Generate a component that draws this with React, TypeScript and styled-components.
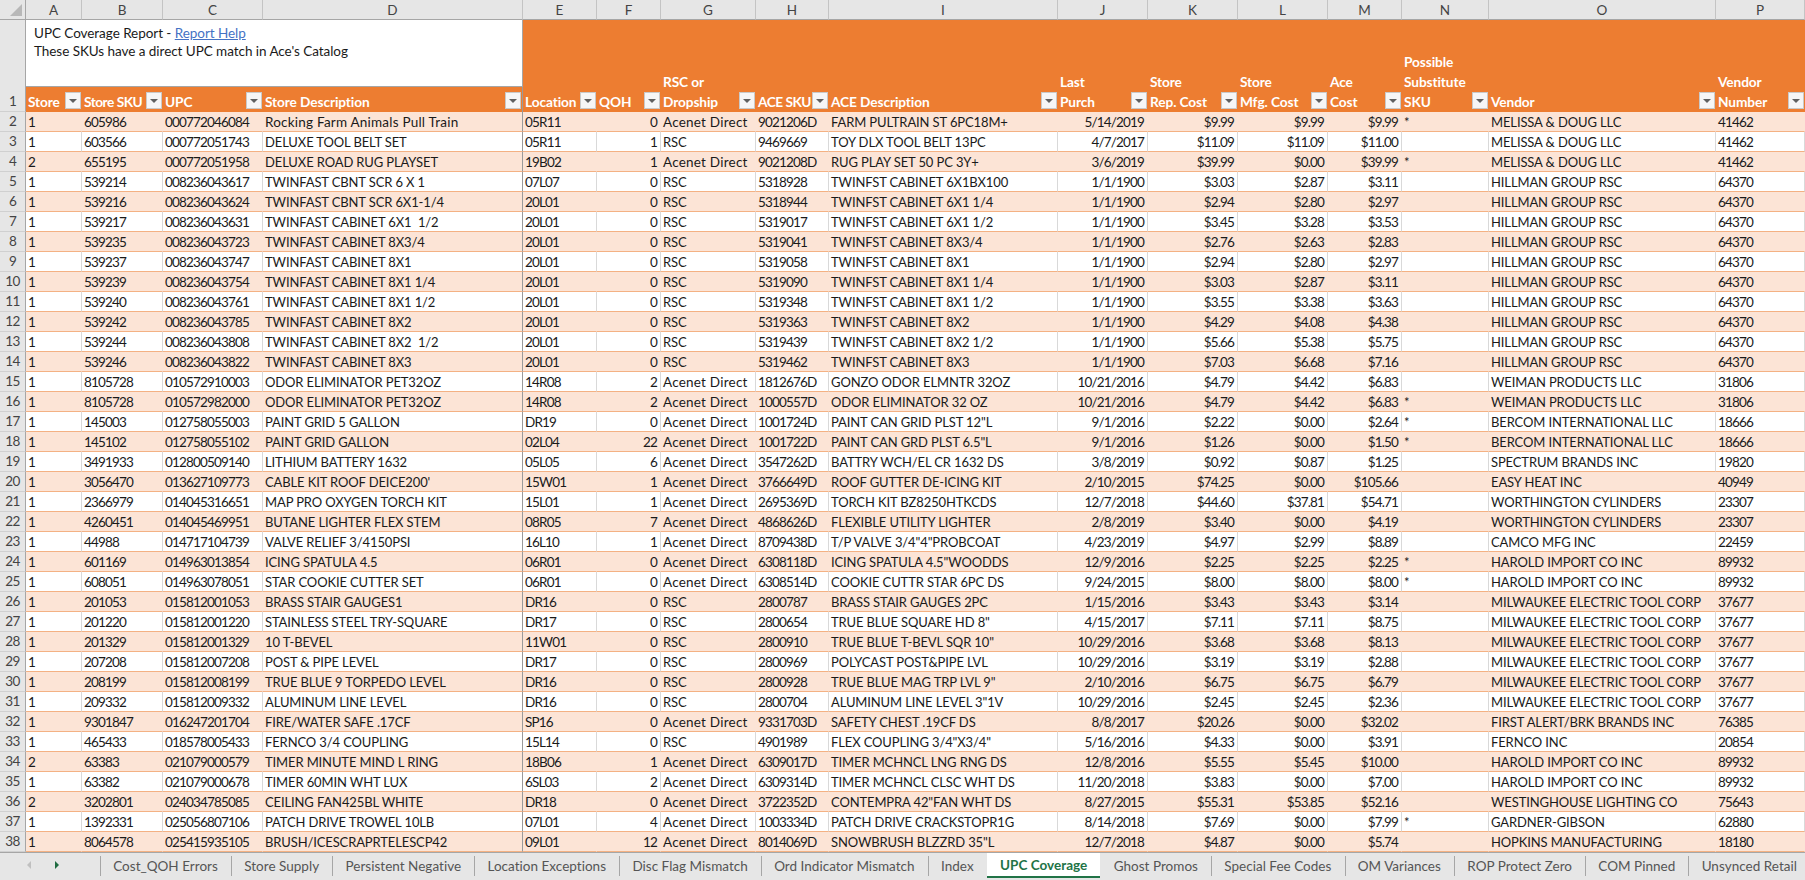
import * as React from 'react'
import styled, { createGlobalStyle } from 'styled-components'

const FONT = `Lato, 'Noto Sans', sans-serif`

const GlobalStyle = createGlobalStyle`
  html, body {
    margin: 0;
    padding: 0;
    height: 100%;
    overflow: hidden;
    background: #fff;
  }
`

const Page = styled.div`
  width: 1805px;
  height: 880px;
  display: flex;
  flex-direction: column;
  font-family: ${FONT};
  color: #1a1a1a;
`
const Sheet = styled.div`
  position: relative;
  flex: 0 0 852px;
  overflow: hidden;
`
const Table = styled.table`
  width: 1805px;
  table-layout: fixed;
  border-collapse: separate;
  border-spacing: 0;
`
const Col = styled.col<{ $w: number }>`
  width: ${p => p.$w}px;
`
const Corner = styled.th`
  position: relative;
  height: 19px;
  padding: 0;
  background: #e6e6e6;
  border-right: 1px solid #a6a6a6;
  border-bottom: 1px solid #a6a6a6;
  &::after {
    content: '';
    position: absolute;
    left: 10px;
    top: 4px;
    width: 12px;
    height: 12px;
    background: #b8b8b8;
    clip-path: polygon(100% 0, 100% 100%, 0 100%);
  }
`
const ColLetter = styled.th`
  padding: 0;
  height: 19px;
  font-size: 13.5px;
  font-weight: 400;
  text-align: center;
  color: #444;
  background: #e6e6e6;
  border-right: 1px solid #c4c4c4;
  border-bottom: 1px solid #a6a6a6;
`
const RowNum = styled.th<{ $tall?: boolean }>`
  padding: 0;
  font-weight: 400;
  font-size: 13.5px;
  letter-spacing: -0.6px;
  text-align: center;
  vertical-align: ${p => (p.$tall ? 'bottom' : 'middle')};
  line-height: 19px;
  color: #444;
  background: #e6e6e6;
  border-right: 1px solid #a6a6a6;
  border-bottom: 1px solid #d0d0d0;
`
const HeadCell = styled.th<{ $freeze?: boolean; $tight?: boolean }>`
  position: relative;
  height: 92px;
  padding: 0 2px 0 2px;
  vertical-align: bottom;
  text-align: left;
  white-space: pre;
  overflow: hidden;
  font-size: 13.7px;
  letter-spacing: ${p => (p.$tight ? '-0.5px' : '-0.1px')};
  font-weight: 700;
  line-height: 20px;
  color: #fff;
  background: #ed7d31;
  border-right: ${p => (p.$freeze ? '1px solid #9a9a9a' : '0')};
`
const FilterButton = styled.span`
  position: absolute;
  right: 1px;
  bottom: 3px;
  width: 14px;
  height: 15px;
  background: #f6f6f6;
  border: 1px solid #c9c9c9;
  &::after {
    content: '';
    position: absolute;
    left: 3px;
    top: 6px;
    border-left: 4px solid transparent;
    border-right: 4px solid transparent;
    border-top: 4px solid #606060;
  }
`
const Row = styled.tr`
  &:nth-child(odd) td {
    background: #fce4d6;
    border-right-color: transparent;
  }
  &:nth-child(odd) td.freeze {
    border-right-color: #9a9a9a;
  }
`
type CellKind = 'num' | 'caps' | 'mixed'
// Calibri's digits are narrow next to its capitals, so each kind gets its own spacing
const KIND_FONT: Record<CellKind, string> = {
  num: 'font-size: 13.5px; letter-spacing: -0.83px;',
  caps: 'font-size: 13px; letter-spacing: -0.12px;',
  mixed: 'font-size: 13.5px; letter-spacing: 0.22px;'
}
const Cell = styled.td<{ $right?: boolean; $freeze?: boolean; $kind: CellKind }>`
  height: 18px;
  padding: 1px ${p => (p.$right ? '3px' : '2px')} 0 2px;
  line-height: 18px;
  white-space: pre;
  overflow: hidden;
  text-align: ${p => (p.$right ? 'right' : 'left')};
  background: #fff;
  border-bottom: 1px solid #f4b183;
  border-right: 1px solid ${p => (p.$freeze ? '#9a9a9a' : '#d9d9d9')};
  ${p => KIND_FONT[p.$kind]}
`
const TextBox = styled.div`
  position: absolute;
  top: 20px;
  left: 26px;
  box-sizing: border-box;
  width: 497px;
  height: 67px;
  padding: 4px 0 0 8px;
  background: #fff;
  border-bottom: 1px solid #a6a6a6;
  border-right: 1px solid #a6a6a6;
  font-size: 13.5px;
  letter-spacing: -0.05px;
  line-height: 18px;
`
const HelpLink = styled.a`
  color: #4472c4;
  text-decoration: underline;
`
const TabBar = styled.div`
  flex: 0 0 28px;
  box-sizing: border-box;
  display: flex;
  background: #e6e6e6;
  border-top: 1px solid #a6a6a6;
  font-size: 13.5px;
  letter-spacing: 0.02px;
  color: #555;
`
const Scroller = styled.div`
  flex: 0 0 100px;
  display: flex;
  align-items: center;
  gap: 24px;
  padding: 0 0 3px 27px;
  box-sizing: border-box;
`
const Arrow = styled.span<{ $on?: boolean }>`
  border-top: 4px solid transparent;
  border-bottom: 4px solid transparent;
  ${p =>
    p.$on
      ? 'border-left: 4px solid #1f6b41;'
      : 'border-right: 4px solid #c0c0c0;'}
`
const Tab = styled.div<{ $active?: boolean; $before?: boolean }>`
  box-sizing: border-box;
  height: 25px;
  padding: 0 13.2px;
  display: flex;
  align-items: center;
  white-space: nowrap;
  ${p =>
    p.$active
      ? `
    background: #fff;
    color: #217346;
    font-weight: 700;
    border-bottom: 2px solid #217346;
  `
      : ''}
  position: relative;
  &::before {
    content: '';
    display: ${p => (p.$active || p.$before ? 'none' : 'block')};
    position: absolute;
    left: 0;
    top: 3px;
    bottom: 2px;
    width: 1px;
    background: #a6a6a6;
  }
`

const WIDTHS = [26, 56, 81, 100, 260, 74, 64, 95, 73, 229, 90, 90, 90, 74, 87, 227, 89]
const LETTERS = 'ABCDEFGHIJKLMNOP'.split('')
const HEADERS = [
  'Store',
  'Store SKU',
  'UPC',
  'Store Description',
  'Location',
  'QOH',
  'RSC or\nDropship',
  'ACE SKU',
  'ACE Description',
  'Last\nPurch',
  'Store\nRep. Cost',
  'Store\nMfg. Cost',
  'Ace\nCost',
  'Possible\nSubstitute\nSKU',
  'Vendor',
  'Vendor\nNumber'
]
// columns with right aligned values: QOH, Last Purch, the three costs
const RIGHT = new Set([5, 9, 10, 11, 12])
// columns holding words, everything else is digits and codes
const WORDS = new Set([3, 6, 8, 13, 14])

const kindOf = (value: string, column: number): CellKind => {
  if (!WORDS.has(column)) return 'num'
  return value === value.toUpperCase() ? 'caps' : 'mixed'
}

const ROWS = `1|605986|000772046084|Rocking Farm Animals Pull Train|05R11|0|Acenet Direct|9021206D|FARM PULTRAIN ST 6PC18M+|5/14/2019|$9.99|$9.99|$9.99|*|MELISSA & DOUG LLC|41462
1|603566|000772051743|DELUXE TOOL BELT SET|05R11|1|RSC|9469669|TOY DLX TOOL BELT 13PC|4/7/2017|$11.09|$11.09|$11.00||MELISSA & DOUG LLC|41462
2|655195|000772051958|DELUXE ROAD RUG PLAYSET|19B02|1|Acenet Direct|9021208D|RUG PLAY SET 50 PC 3Y+|3/6/2019|$39.99|$0.00|$39.99|*|MELISSA & DOUG LLC|41462
1|539214|008236043617|TWINFAST CBNT SCR 6 X 1|07L07|0|RSC|5318928|TWINFST CABINET 6X1BX100|1/1/1900|$3.03|$2.87|$3.11||HILLMAN GROUP RSC|64370
1|539216|008236043624|TWINFAST CBNT SCR 6X1-1/4|20L01|0|RSC|5318944|TWINFST CABINET 6X1 1/4|1/1/1900|$2.94|$2.80|$2.97||HILLMAN GROUP RSC|64370
1|539217|008236043631|TWINFAST CABINET 6X1  1/2|20L01|0|RSC|5319017|TWINFST CABINET 6X1 1/2|1/1/1900|$3.45|$3.28|$3.53||HILLMAN GROUP RSC|64370
1|539235|008236043723|TWINFAST CABINET 8X3/4|20L01|0|RSC|5319041|TWINFST CABINET 8X3/4|1/1/1900|$2.76|$2.63|$2.83||HILLMAN GROUP RSC|64370
1|539237|008236043747|TWINFAST CABINET 8X1|20L01|0|RSC|5319058|TWINFST CABINET 8X1|1/1/1900|$2.94|$2.80|$2.97||HILLMAN GROUP RSC|64370
1|539239|008236043754|TWINFAST CABINET 8X1 1/4|20L01|0|RSC|5319090|TWINFST CABINET 8X1 1/4|1/1/1900|$3.03|$2.87|$3.11||HILLMAN GROUP RSC|64370
1|539240|008236043761|TWINFAST CABINET 8X1 1/2|20L01|0|RSC|5319348|TWINFST CABINET 8X1 1/2|1/1/1900|$3.55|$3.38|$3.63||HILLMAN GROUP RSC|64370
1|539242|008236043785|TWINFAST CABINET 8X2|20L01|0|RSC|5319363|TWINFST CABINET 8X2|1/1/1900|$4.29|$4.08|$4.38||HILLMAN GROUP RSC|64370
1|539244|008236043808|TWINFAST CABINET 8X2  1/2|20L01|0|RSC|5319439|TWINFST CABINET 8X2 1/2|1/1/1900|$5.66|$5.38|$5.75||HILLMAN GROUP RSC|64370
1|539246|008236043822|TWINFAST CABINET 8X3|20L01|0|RSC|5319462|TWINFST CABINET 8X3|1/1/1900|$7.03|$6.68|$7.16||HILLMAN GROUP RSC|64370
1|8105728|010572910003|ODOR ELIMINATOR PET32OZ|14R08|2|Acenet Direct|1812676D|GONZO ODOR ELMNTR 32OZ|10/21/2016|$4.79|$4.42|$6.83||WEIMAN PRODUCTS LLC|31806
1|8105728|010572982000|ODOR ELIMINATOR PET32OZ|14R08|2|Acenet Direct|1000557D|ODOR ELIMINATOR 32 OZ|10/21/2016|$4.79|$4.42|$6.83|*|WEIMAN PRODUCTS LLC|31806
1|145003|012758055003|PAINT GRID 5 GALLON|DR19|0|Acenet Direct|1001724D|PAINT CAN GRID PLST 12"L|9/1/2016|$2.22|$0.00|$2.64|*|BERCOM INTERNATIONAL LLC|18666
1|145102|012758055102|PAINT GRID GALLON|02L04|22|Acenet Direct|1001722D|PAINT CAN GRD PLST 6.5"L|9/1/2016|$1.26|$0.00|$1.50|*|BERCOM INTERNATIONAL LLC|18666
1|3491933|012800509140|LITHIUM BATTERY 1632|05L05|6|Acenet Direct|3547262D|BATTRY WCH/EL CR 1632 DS|3/8/2019|$0.92|$0.87|$1.25||SPECTRUM BRANDS INC|19820
1|3056470|013627109773|CABLE KIT ROOF DEICE200'|15W01|1|Acenet Direct|3766649D|ROOF GUTTER DE-ICING KIT|2/10/2015|$74.25|$0.00|$105.66||EASY HEAT INC|40949
1|2366979|014045316651|MAP PRO OXYGEN TORCH KIT|15L01|1|Acenet Direct|2695369D|TORCH KIT BZ8250HTKCDS|12/7/2018|$44.60|$37.81|$54.71||WORTHINGTON CYLINDERS|23307
1|4260451|014045469951|BUTANE LIGHTER FLEX STEM|08R05|7|Acenet Direct|4868626D|FLEXIBLE UTILITY LIGHTER|2/8/2019|$3.40|$0.00|$4.19||WORTHINGTON CYLINDERS|23307
1|44988|014717104739|VALVE RELIEF 3/4150PSI|16L10|1|Acenet Direct|8709438D|T/P VALVE 3/4"4"PROBCOAT|4/23/2019|$4.97|$2.99|$8.89||CAMCO MFG INC|22459
1|601169|014963013854|ICING SPATULA 4.5|06R01|0|Acenet Direct|6308118D|ICING SPATULA 4.5"WOODDS|12/9/2016|$2.25|$2.25|$2.25|*|HAROLD IMPORT CO INC|89932
1|608051|014963078051|STAR COOKIE CUTTER SET|06R01|0|Acenet Direct|6308514D|COOKIE CUTTR STAR 6PC DS|9/24/2015|$8.00|$8.00|$8.00|*|HAROLD IMPORT CO INC|89932
1|201053|015812001053|BRASS STAIR GAUGES1|DR16|0|RSC|2800787|BRASS STAIR GAUGES 2PC|1/15/2016|$3.43|$3.43|$3.14||MILWAUKEE ELECTRIC TOOL CORP|37677
1|201220|015812001220|STAINLESS STEEL TRY-SQUARE|DR17|0|RSC|2800654|TRUE BLUE SQUARE HD 8"|4/15/2017|$7.11|$7.11|$8.75||MILWAUKEE ELECTRIC TOOL CORP|37677
1|201329|015812001329|10 T-BEVEL|11W01|0|RSC|2800910|TRUE BLUE T-BEVL SQR 10"|10/29/2016|$3.68|$3.68|$8.13||MILWAUKEE ELECTRIC TOOL CORP|37677
1|207208|015812007208|POST & PIPE LEVEL|DR17|0|RSC|2800969|POLYCAST POST&PIPE LVL|10/29/2016|$3.19|$3.19|$2.88||MILWAUKEE ELECTRIC TOOL CORP|37677
1|208199|015812008199|TRUE BLUE 9 TORPEDO LEVEL|DR16|0|RSC|2800928|TRUE BLUE MAG TRP LVL 9"|2/10/2016|$6.75|$6.75|$6.79||MILWAUKEE ELECTRIC TOOL CORP|37677
1|209332|015812009332|ALUMINUM LINE LEVEL|DR16|0|RSC|2800704|ALUMINUM LINE LEVEL 3"1V|10/29/2016|$2.45|$2.45|$2.36||MILWAUKEE ELECTRIC TOOL CORP|37677
1|9301847|016247201704|FIRE/WATER SAFE .17CF|SP16|0|Acenet Direct|9331703D|SAFETY CHEST .19CF DS|8/8/2017|$20.26|$0.00|$32.02||FIRST ALERT/BRK BRANDS INC|76385
1|465433|018578005433|FERNCO 3/4 COUPLING|15L14|0|RSC|4901989|FLEX COUPLING 3/4"X3/4"|5/16/2016|$4.33|$0.00|$3.91||FERNCO INC|20854
2|63383|021079000579|TIMER MINUTE MIND L RING|18B06|1|Acenet Direct|6309017D|TIMER MCHNCL LNG RNG DS|12/8/2016|$5.55|$5.45|$10.00||HAROLD IMPORT CO INC|89932
1|63382|021079000678|TIMER 60MIN WHT LUX|6SL03|2|Acenet Direct|6309314D|TIMER MCHNCL CLSC WHT DS|11/20/2018|$3.83|$0.00|$7.00||HAROLD IMPORT CO INC|89932
2|3202801|024034785085|CEILING FAN425BL WHITE|DR18|0|Acenet Direct|3722352D|CONTEMPRA 42"FAN WHT DS|8/27/2015|$55.31|$53.85|$52.16||WESTINGHOUSE LIGHTING CO|75643
1|1392331|025056807106|PATCH DRIVE TROWEL 10LB|07L01|4|Acenet Direct|1003334D|PATCH DRIVE CRACKSTOPR1G|8/14/2018|$7.69|$0.00|$7.99|*|GARDNER-GIBSON|62880
1|8064578|025415935105|BRUSH/ICESCRAPRTELESCP42|09L01|12|Acenet Direct|8014069D|SNOWBRUSH BLZZRD 35"L|12/7/2018|$4.87|$0.00|$5.74||HOPKINS MANUFACTURING|18180`
  .split('\n')
  .map(line => line.split('|'))

const TABS = [
  'Cost_QOH Errors',
  'Store Supply',
  'Persistent Negative',
  'Location Exceptions',
  'Disc Flag Mismatch',
  'Ord Indicator Mismatch',
  'Index',
  'UPC Coverage',
  'Ghost Promos',
  'Special Fee Codes',
  'OM Variances',
  'ROP Protect Zero',
  'COM Pinned',
  'Unsynced Retail'
]
const ACTIVE_TAB = 'UPC Coverage'

export default function App() {
  return (
    <Page>
      <GlobalStyle />
      <Sheet>
        <Table>
          <colgroup>
            {WIDTHS.map((w, i) => (
              <Col key={i} $w={w} />
            ))}
          </colgroup>
          <thead>
            <tr>
              <Corner />
              {LETTERS.map(l => (
                <ColLetter key={l}>{l}</ColLetter>
              ))}
            </tr>
            <tr>
              <RowNum $tall>1</RowNum>
              {HEADERS.map((h, i) => (
                <HeadCell key={h} $freeze={i === 3} $tight={h.endsWith(' SKU')}>
                  {h}
                  <FilterButton />
                </HeadCell>
              ))}
            </tr>
          </thead>
          <tbody>
            {ROWS.map((row, r) => (
              <Row key={r}>
                <RowNum>{r + 2}</RowNum>
                {row.map((value, c) => (
                  <Cell
                    key={c}
                    $right={RIGHT.has(c)}
                    $freeze={c === 3}
                    $kind={kindOf(value, c)}
                    className={c === 3 ? 'freeze' : undefined}
                  >
                    {value}
                  </Cell>
                ))}
              </Row>
            ))}
          </tbody>
        </Table>
        <TextBox>
          UPC Coverage Report - <HelpLink>Report Help</HelpLink>
          <br />
          These SKUs have a direct UPC match in Ace's Catalog
        </TextBox>
      </Sheet>
      <TabBar>
        <Scroller>
          <Arrow />
          <Arrow $on />
        </Scroller>
        {TABS.map((t, i) => (
          <Tab
            key={t}
            $active={t === ACTIVE_TAB}
            $before={TABS[i - 1] === ACTIVE_TAB}
          >
            {t}
          </Tab>
        ))}
      </TabBar>
    </Page>
  )
}
